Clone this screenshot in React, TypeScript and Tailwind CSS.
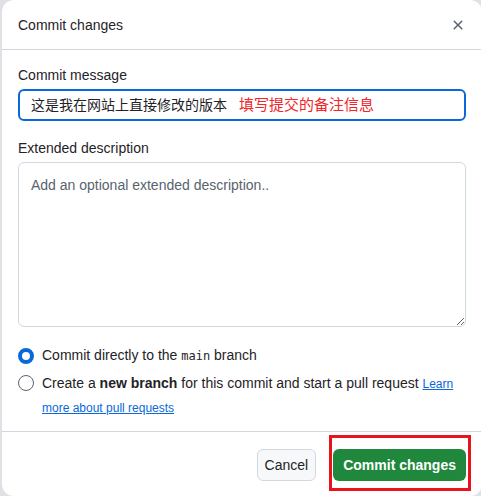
import React from 'react';

const XIcon: React.FC = () => (
  <svg width="16" height="16" viewBox="0 0 16 16" fill="#59636e">
    <path d="M3.72 3.72a.75.75 0 0 1 1.06 0L8 6.94l3.22-3.22a.749.749 0 0 1 1.275.326.749.749 0 0 1-.215.734L9.06 8l3.22 3.22a.749.749 0 0 1-.326 1.275.749.749 0 0 1-.734-.215L8 9.06l-3.22 3.22a.751.751 0 0 1-1.042-.018.751.751 0 0 1-.018-1.042L6.94 8 3.72 4.78a.75.75 0 0 1 0-1.06Z" />
  </svg>
);

const App: React.FC = () => {
  return (
    <div
      className="h-[496px] w-[481px] overflow-hidden bg-[#dfe1e4] pl-[2px] text-[#1f2328]"
      style={{ fontFamily: '"Liberation Sans", "Noto Sans CJK SC", sans-serif' }}
    >
      <div className="flex h-[496px] w-[480px] flex-col rounded-xl bg-white">
        {/* header */}
        <div className="flex h-[50px] items-center justify-between border-b border-[#d1d9e0] pl-4 pr-4">
          <h1 className="text-sm">Commit changes</h1>
          <XIcon />
        </div>

        {/* body */}
        <div className="flex flex-col px-4 pt-[15px]">
          <label className="text-sm leading-5">Commit message</label>
          <div className="mt-1 flex h-8 items-center rounded-md border-2 border-[#0969da] pl-[11px]">
            <span className="text-sm">这是我在网站上直接修改的版本</span>
            <span className="ml-[12px] text-[15px] text-[#f0262b]">填写提交的备注信息</span>
          </div>

          <label className="mt-[17px] text-sm leading-5">Extended description</label>
          <textarea
            readOnly
            placeholder="Add an optional extended description.."
            className="mt-1 h-[165px] w-full resize rounded-md border border-[#d1d9e0] bg-white px-3 pt-[12px] text-sm leading-5 outline-none placeholder:text-[#59636e]"
          />

          <div className="mt-[18px] flex items-center gap-2 text-sm leading-5">
            <span className="box-border h-4 w-4 shrink-0 rounded-full border-[4px] border-[#0969da] bg-white" />
            <span>
              Commit directly to the{' '}
              <code className="text-[12px]" style={{ fontFamily: '"DejaVu Sans Mono", monospace' }}>main</code> branch
            </span>
          </div>

          <div className="mt-[6px] flex items-start gap-2 text-sm leading-[23px]">
            <span className="mt-[3px] box-border h-4 w-4 shrink-0 rounded-full border border-[#59636e] bg-white" />
            <span>
              Create a <b className="font-bold">new branch</b> for this commit and start a pull request{' '}
              <a className="text-[12px] text-[#0969da] underline">Learn more about pull requests</a>
            </span>
          </div>
        </div>

        {/* footer */}
        <div className="mt-[11px] flex justify-end gap-[17px] border-t border-[#d1d9e0] px-4 pt-[17px]">
          <button className="h-8 rounded-md border border-[#d1d9e0] bg-[#f6f8fa] px-[7px] text-sm">
            Cancel
          </button>
          <div className="relative">
            <button className="h-8 rounded-md bg-[#1f883d] px-[10px] text-sm font-bold text-white">
              Commit changes
            </button>
            <div className="pointer-events-none absolute -left-1 -right-[5px] -top-[14px] -bottom-[10px] border-[3px] border-[#e8131c]" />
          </div>
        </div>
      </div>
    </div>
  );
};

export default App;
